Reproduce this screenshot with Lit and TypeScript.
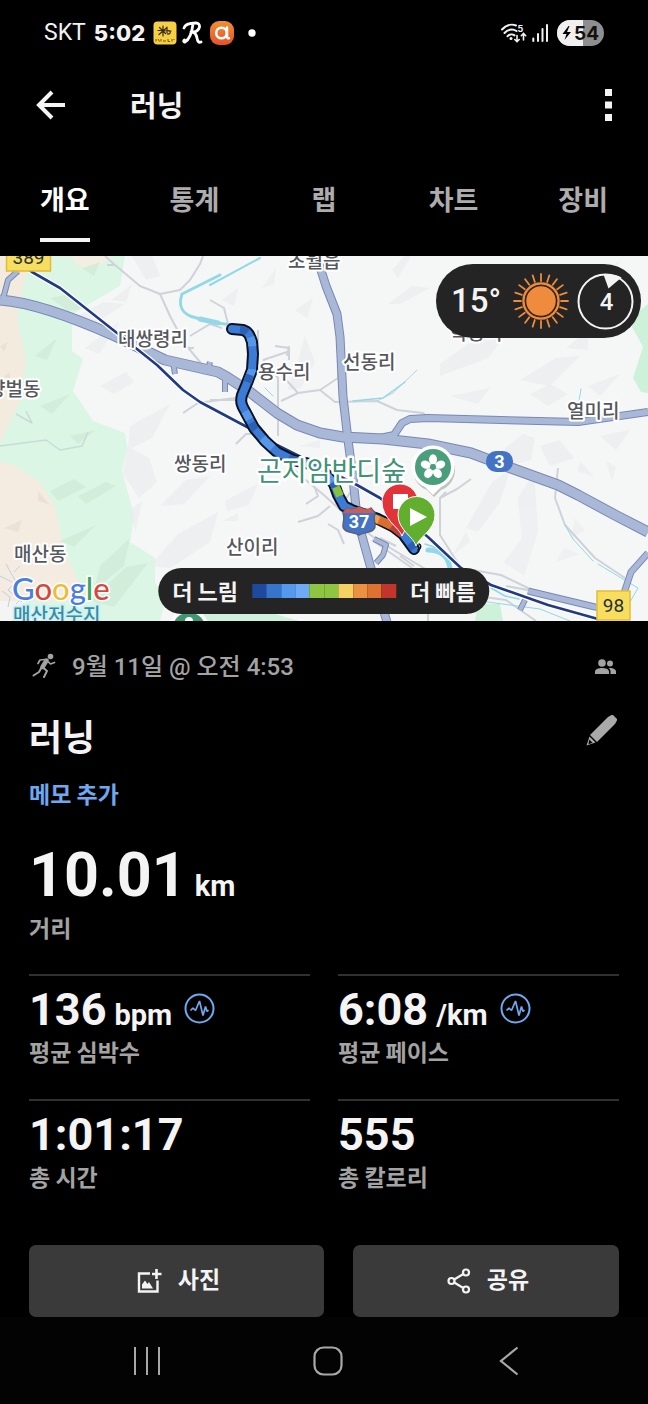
import { LitElement, html, svg, css } from "lit";
import { customElement, property, state } from "lit/decorators.js";
import { classMap } from "lit/directives/class-map.js";

const FONT = css`Roboto, "Noto Sans CJK KR", sans-serif`;
const KOREAN = css`"Noto Sans CJK KR", sans-serif`;

/* ---------- system status bar ---------- */
@customElement("status-bar")
class StatusBar extends LitElement {
  static styles = css`
    :host { display: block; color: #f2f2f2; }
    .bar { display: flex; align-items: center; justify-content: space-between; height: 66px; padding: 0 44px; font-family: ${FONT}; }
    .side { display: flex; align-items: center; gap: 8px; }
    .carrier { font-size: 23px; line-height: 28px; font-weight: 400; }
    .clock { font-family: Inter, sans-serif; font-size: 22px; line-height: 28px; font-weight: 800; }
    .apps { display: flex; align-items: center; gap: 5px; }
    svg { display: block; }
    .num { font-family: Inter, sans-serif; font-size: 19px; font-weight: 700; }
    .tiny { font-family: Inter, sans-serif; font-size: 9px; font-weight: 700; }
  `;
  render() {
    return html`
      <div class="bar">
        <div class="side">
          <span class="carrier">SKT</span>
          <span class="clock">5:02</span>
          <span class="apps">
            <svg width="24" height="24" viewBox="0 0 24 24" aria-hidden="true">
              <rect x=".5" y=".5" width="23" height="23" rx="4" fill="#f7cf45" />
              <path d="M10 5v10M5 9.500l13 .5M6 13.500l8-7M6.500 6.500l6 6M14 6v6M14 10c4-1.500 4.500 3.500 .5 3" fill="none" stroke="#332a10" stroke-width="1.200" stroke-linecap="round" />
              <path d="M3 18v2.500M5 18l1.500 2.500M8 18v2.500M10 20h3M15 18v2.500h2M19 18v2.500M21 18v1" stroke="#6a5716" stroke-width="1" fill="none" />
            </svg>
            <svg width="23" height="24" viewBox="0 0 23 24" aria-hidden="true">
              <path d="M2 7C3 3 9 2 14 2c5 0 5 7-2 9h-3c4 0 5 2 6 6 .5 3 1.500 5 4 4M11 3c-1 8-3 15-8 18-1 .5-2-1-.5-2" fill="none" stroke="#fff" stroke-width="2.800" stroke-linecap="round" stroke-linejoin="round" />
            </svg>
            <svg width="24" height="24" viewBox="0 0 24 24" aria-hidden="true">
              <defs><linearGradient id="o" x1="0" y1="0" x2="0" y2="1"><stop offset="0" stop-color="#ee9232" /><stop offset="1" stop-color="#e8502c" /></linearGradient></defs>
              <rect width="24" height="24" rx="9" fill="url(#o)" />
              <circle cx="11.500" cy="12" r="5.300" fill="none" stroke="#fff" stroke-width="2.500" />
              <path d="M17 6.500v8.500c0 2 1 2.500 2 2.200" fill="none" stroke="#fff" stroke-width="2.500" stroke-linecap="round" />
            </svg>
          </span>
          <svg width="22" height="8" viewBox="0 0 22 8" aria-hidden="true"><circle cx="10" cy="4" r="3.700" fill="#fff" /></svg>
        </div>
        <div class="side">
          <svg width="49" height="20" viewBox="0 0 49 20" aria-hidden="true">
            <g fill="none" stroke="#f2f2f2" stroke-width="2" stroke-linecap="round">
              <path d="M2 6.500C5.500 2.500 11 .5 16 2.500M4.500 10c3-3.500 8-4.500 12-2M7.500 13.200c2-2 5-2.400 7-.8" />
              <path d="M17 12.500v6M14.800 16.500l2.200 2.200 2.200-2.200M23.500 17v-6M21.300 12.700l2.200-2.200 2.200 2.200" stroke-width="1.600" />
            </g>
            <circle cx="11" cy="15.500" r="1.500" fill="#f2f2f2" />
            <text class="tiny" x="17.500" y="9" fill="#f2f2f2">5</text>
            <path d="M33.300 18v-2.500M38 18v-7M42.500 18V6M47 18V2" stroke="#f2f2f2" stroke-width="2" stroke-linecap="round" />
          </svg>
          <svg width="47" height="26" viewBox="0 0 47 26" role="img" aria-label="배터리 54%">
            <defs><clipPath id="b"><rect width="47" height="26" rx="13" /></clipPath></defs>
            <g clip-path="url(#b)"><rect width="47" height="26" fill="#8e8e8e" /><rect width="26" height="26" fill="#f0f0f0" /></g>
            <path d="M11.500 6 5.500 14h4L7.500 20l6.500-8h-4l2.500-6z" fill="#000" />
            <text class="num" x="17" y="20" fill="#111">54</text>
          </svg>
        </div>
      </div>
    `;
  }
}

/* ---------- map with the recorded route ---------- */
type Label = { t: string; x: number; y: number; kind?: string };
const LABELS: Label[] = [
  { t: "초월읍", x: 288, y: 12 },
  { t: "대쌍령리", x: 118, y: 90 },
  { t: "용수리", x: 258, y: 123 },
  { t: "선동리", x: 343, y: 113 },
  { t: "양벌동", x: -12, y: 140 },
  { t: "열미리", x: 567, y: 162 },
  { t: "쌍동리", x: 174, y: 215 },
  { t: "매산동", x: 14, y: 305 },
  { t: "산이리", x: 226, y: 298 },
  { t: "학동리", x: 450, y: 84 },
  { t: "매산저수지", x: 13, y: 366, kind: "water" },
  { t: "곤지암반디숲", x: 257, y: 225, kind: "park" },
];
const HIGHWAYS = [
  { w: 9, d: "M0 44C30 46 70 60 115 80L165 104 218 116 227 121 250 136 277 157 297 169 320 177 343 181 383 183 428 188 471 197 511 212 558 229 578 239 615 259 648 276" },
  { w: 6, d: "M380 182l14-3 8-12 8-4 18-1 150 4 70-10" },
  { w: 7, d: "M319 8l7 22 11 28 3 23 3 60 5 43 5 38 4 40 13 47 17 57" },
  { w: 5, d: "M528 335l67 16 20 2M648 297l-17 19-8 24" },
  { w: 4, d: "M3 43l5-19 10-9M374 283l12 6-3 10-7 8M520 354l5-10M225 122v14M173 106l2 12M208 114l2-8" },
];
const LEGEND = ["#1d4a9e", "#3774cc", "#5499ee", "#6eabf7", "#8fc641", "#8fc641", "#f5d062", "#ec9141", "#df7230", "#c1352a"];
const ROUTE = "M232 73l11 1c6 2 7 6 9 12l1 12-1 16-5 13-5 12c-2 7 0 11 3 16l9 17 11 13 12 11 16 8 17 4 14 8 10 12 4 11 6 11 10 5 24 8 16 8 9 7 11 15";
const RAIL = "M5-3l27 19 28 16 57 45 40 32 26 25 17 12 47 25 30 18 80 40 23 13 48 39 33 31 30 17 57 20 50 14";

@customElement("route-map")
class RouteMap extends LitElement {
  static styles = css`
    :host { display: block; }
    .map { position: relative; height: 365px; overflow: hidden; background: #f5f6f6; font-family: ${FONT}; }
    .canvas { display: block; width: 100%; height: 100%; }
    .place { font-size: 19px; font-weight: 500; fill: #55585e; stroke: #fff; stroke-width: 4px; stroke-linejoin: round; paint-order: stroke; }
    .water { fill: #3a8ba3; stroke: #cdf2f3; }
    .park { font-size: 27px; fill: #3f9274; font-weight: 400; stroke-width: 5px; }
    .shield { font-size: 19px; fill: #27303c; }
    .blue { font-size: 18px; font-weight: 700; fill: #fff; }
    .google { font-family: Lato, sans-serif; font-size: 31px; font-weight: 500; stroke: #fff; stroke-width: 3px; paint-order: stroke; }
    .pill { position: absolute; display: flex; align-items: center; background: #242424; color: #f4f4f4; }
    .weather { top: 8px; right: 7px; height: 74px; padding: 0 7px 0 15px; border-radius: 37px; gap: 8px; }
    .temp { font-size: 33px; line-height: 40px; font-weight: 500; width: 54px; }
    .weather svg { display: block; }
    .uv { font-size: 24px; font-weight: 500; fill: #f4f4f4; }
    .legend { bottom: 7px; left: 50%; transform: translateX(-50%); height: 46px; padding: 0 14px; border-radius: 23px; gap: 14px; font-family: ${KOREAN}; font-size: 22px; line-height: 30px; font-weight: 700; white-space: nowrap; }
    .legend .word { padding-bottom: 2px; }
    .scale { display: flex; width: 144px; height: 14px; }
    .scale span { flex: 1; }
  `;
  render() {
    return html`
      <div class="map">
        <svg class="canvas" viewBox="0 0 648 365" preserveAspectRatio="xMidYMid slice" role="img" aria-label="러닝 경로 지도">
          <path d="M0 0h125l-5 30-26 15-22 14 0 36 11 8-10 32 20 30 32 12 2 14-5 24 12 44-4 27 25 16 0 24 10 20-5 19H0z" fill="#dbf6e4" />
          <path d="M0 0h25l3 10-8 35-3 18 9 42-6 40-20 42z" fill="#f4ebdf" />
          <path d="M0 206l12 2 28 18 15 24 7 35 13 34 13 21-20 5-68 0z" fill="#f4ece1" />
          <path d="M70 0h42l-10 9c-10 4-22 4-28-3z" fill="#f3eee2" />
          <path d="M0 345h24l20 20H0z" fill="#f4f4f4" />
          <path d="M648 48l-20 16 8 14 7 13-10 31 8 14 7 1zM478 348h22l3 17h-28zM195 352l80 6 24 7h-110z" fill="#cdf2d9" />
          <g fill="#cbead6" opacity=".6">
            <path d="M35 100l22-18-10 22zM82 12l18-6-6 14zM40 150l30-12-18 20zM50 235l24-12 12 8-28 14zM78 240l28-14 10 4-30 18zM60 285l36-16-22 22zM50 42l20-4 18 14-20 3zM100 310l30-28-6 28-30 24zM70 180l26-6-18 14zM90 345l36-34 22-4-34 44z" />
          </g>
          <g fill="#eaddcf" opacity=".7"><path d="M4 272l18-8-4 12zM38 235l12 14-12-4zM4 120l6-4v10zM0 90l8-4-4 10z" /></g>
          <g fill="#ebecee" opacity=".65">
            <path d="M75 62l28-16 22 2-34 22zM112 44l20-16-6 18zM85 92l34-26-20 32zM100 130l26-14 8 10-20 12zM130 170l40-22-18 34-24 12zM128 255l14-10-6 30zM127 190l22 12 8 24-18 16-16-24zM150 310l28-32 40-22-8 30-40 26zM160 250l26-26 24-4-26 28zM132 0l20 0 8 20-14 4z" />
            <path d="M222 44l16-12-4 18zM262 32l14-20-2 16zM295 54l18-12-6 20zM305 80l10 26-14 26-14 2 10-26zM392 14l14-16 6 0-14 24zM388 48l24-18 18 2-30 16zM225 245l34-18-10 22-22 6zM222 265l16-8 0 8zM300 190l20-6 0 8z" />
            <path d="M440 108l28-20 40-12-20 26-48 18zM520 124l36-22 24-2-30 30zM566 92l22-18 0 20zM600 18l20-14-10 22zM588 130l32-12-20 22zM450 140l40-8-12 16zM530 138l20-10 18 10-20 12z" />
            <path d="M466 272l26-46 18-12-10 32-22 30zM505 192l18-14 12 4-4 22-24 6zM518 242l16-26 4 60-14 44-20-14 18-24zM452 300l14-24 4 10zM540 190l20-6 14 18-24 8zM575 262l10 12-14 8zM606 205l10 6-4 14zM580 205l14 16-16-6zM600 180l30-6-14 20zM556 306l8-14 16 6z" />
          </g>
          <g fill="none" stroke="#cfd3d9" stroke-width="2" stroke-linejoin="round">
            <path d="M105 0l10 9 25 21 20 8 10 22 15 28 20 24M160 38l20-4 10-10 10-16 3-8M115 9l-8 0M185 92l9 0M190 80l20-12 12 4M183 157l15-10 22-3 15-2" />
            <path d="M210 44l14 8 4 16M258 74l0 24M263 104l27-9M275 90l14 2 0 12M289 90l-2 10M280 117l18 20 22-3 15 12 42-1 20 9 26 3 10 8M263 104l15 18 0 58M281 145l17-8M320 134l18-12 0-8M210 144l26 0 12-10" />
            <path d="M236 188l10-10 12 0M277 198l24 22 24 20 24 22 28 22 50 30M306 248l12-8-4-10M298 266l20-6 12-10M328 268l10 6 6 14M330 230l8 22 10-12 6-10M372 284l40 28M400 300l14 10M396 290l-16-8" />
            <path d="M558 212l-3 30 10 27 30 33 30 20M471 223l-14 10-17 9 0 37 21 33 40 7 27 13M440 242l6-6M506 330l22 4M476 340l30 4 30 21M455 345l32-4M428 330l0 35" />
            <path d="M16 158l16 9-6-12M0 190l46-6 14 10 22-4 6-14" stroke="#c9dbd8" stroke-width="1.500" />
            <path d="M6 308l10 18-8 8 14 12M0 320l12 6M14 316l6-6M2 335l8 6-2 10M24 340l-8 8M417 114l-24 23-16 8" stroke="#bfd0e2" stroke-width="1" />
          </g>
          <g fill="none" stroke="#93d8e6" stroke-linecap="round" stroke-linejoin="round">
            <path d="M220 19l-22 11-16 8c-4 12 0 18 8 22l20 6 22 3" stroke-width="3" />
            <path d="M200 63l18 4M428 294c12 0 20 6 22 18" stroke-width="5" />
            <path d="M210 29l50-27" stroke-width="2" />
            <path d="M491 332l14 8 14 3M353 145l30-3 22-16M425 288l12 4" stroke-width="1.500" />
            <path d="M565 269l8 14 20 22M598 308l40 24-8 14M581 133l-2 12M265 132l8 8M480 345l60 8 30 12" stroke-width="1" />
          </g>
          ${HIGHWAYS.map((h) => svg`<path d=${h.d} fill="none" stroke="#7988b5" stroke-width=${h.w + 2} stroke-linejoin="round" />`)}
          ${HIGHWAYS.map((h) => svg`<path d=${h.d} fill="none" stroke="#a9b8d7" stroke-width=${h.w} stroke-linejoin="round" />`)}
          <g fill="none" stroke-linejoin="round">
            <path d=${RAIL} stroke="#fff" stroke-width="5" />
            <path d=${RAIL} stroke="#213a82" stroke-width="2.600" />
          </g>
          <g fill="none" stroke-linejoin="round" stroke-linecap="round">
            <path d=${ROUTE} stroke="#0b1220" stroke-width="12" />
            <path d=${ROUTE} stroke="#3c7cd6" stroke-width="8" />
            <path d=${ROUTE} stroke="#5797ea" stroke-width="8" stroke-linecap="butt" stroke-dasharray="9 23 14 31" stroke-dashoffset="-22" />
            <path d=${ROUTE} stroke="#2b60b4" stroke-width="8" stroke-linecap="butt" stroke-dasharray="8 44" stroke-dashoffset="-8" />
            <path d="M336 231l4 9" stroke="#86c23d" stroke-width="8" stroke-linecap="butt" />
            <path d="M374 262l6 3" stroke="#eda24b" stroke-width="8" stroke-linecap="butt" />
            <path d="M379 264l13 6" stroke="#dc6d2d" stroke-width="8" stroke-linecap="butt" />
            <path d="M392 270l10 8" stroke="#bd4030" stroke-width="8" stroke-linecap="butt" />
            <path d="M418 294c4-2 3-5 1-6" stroke="#0b1220" stroke-width="1.500" />
          </g>
          ${LABELS.map((l) => svg`<text class="place ${l.kind ?? ""}" x=${l.x} y=${l.y}>${l.t}</text>`)}

          <rect x="6.500" y="-10" width="44" height="25" fill="#f8de5e" stroke="#dfba3d" stroke-width="1.500" />
          <text class="shield" x="28.500" y="8" text-anchor="middle">389</text>
          <rect x="597" y="335" width="33" height="29" fill="#f8de5e" stroke="#e3bd3a" stroke-width="1.500" />
          <text class="shield" x="613.500" y="356" text-anchor="middle">98</text>
          <rect x="486" y="195" width="27" height="21" rx="10" fill="#4473c5" />
          <text class="blue" x="499.500" y="212" text-anchor="middle">3</text>
          <path d="M347 252c3 2 7 2 12-1 5 3 9 3 12 1l4 5c-2 5 0 8 0 13 0 7-11 6-16 9-5-3-16-2-16-9 0-5 2-8 0-13z" fill="#4473c5" stroke="#5b5f78" stroke-width="1.500" />
          <path d="M347 252c3 2 7 2 12-1 5 3 9 3 12 1l3 5h-31z" fill="#cf5b55" />
          <text class="blue" x="359" y="272" text-anchor="middle">37</text>

          <path d="M433 239l-7-7a21 21 0 1 1 14 0z" fill="#7d8886" opacity=".45" transform="translate(1 2)" />
          <path d="M433 239l-8-8a21.500 21.500 0 1 1 16 0z" fill="#fff" />
          <circle cx="433" cy="211" r="18" fill="#4a9e7c" />
          <g fill="#fff">
            ${[0, 72, 144, 216, 288].map((a) => svg`<ellipse cx="433" cy="203.500" rx="4" ry="5.200" transform="rotate(${a} 433 211)" />`)}
          </g>
          <circle cx="433" cy="211" r="3" fill="#4a9e7c" />
          <circle cx="189" cy="373" r="20" fill="#fff" />
          <circle cx="189" cy="373" r="16.500" fill="#3f9673" />
          <circle cx="189" cy="365" r="4" fill="#fff" />

          <path d="M402 280c-3-9-20-17-20-34a18 18 0 0 1 36 0c0 12-12 24-16 34z" fill="#e2323a" stroke="#fff" stroke-width="1" />
          <rect x="393" y="238" width="15" height="15" fill="#fff" />
          <path d="M416 290c-2-9-18-16-18-31a18.500 18.500 0 0 1 37 0c0 15-16 22-19 31z" fill="#62ae2f" stroke="#fff" stroke-width="1" />
          <path d="M410 252v18l17-9z" fill="#fff" />

          <text class="google" x="12" y="344"><tspan fill="#4a7fe0">G</tspan><tspan fill="#d6483c">o</tspan><tspan fill="#edbc3a">o</tspan><tspan fill="#4a7fe0">g</tspan><tspan fill="#46a35c">l</tspan><tspan fill="#d6483c">e</tspan></text>
        </svg>

        <div class="pill weather">
          <span class="temp">15°</span>
          <svg width="56" height="56" viewBox="-28 -28 56 56" role="img" aria-label="맑음">
            <circle r="17.500" fill="none" stroke="#ee8b3c" stroke-width="2.500" />
            <circle r="15.500" fill="#ee8b3c" stroke="#33261c" stroke-width="1.500" />
            ${Array.from({ length: 20 }, (_, i) => svg`<path d="M0-20V-27" stroke="#ee8b3c" stroke-width="1.800" stroke-linecap="round" transform="rotate(${i * 18})" />`)}
          </svg>
          <svg width="57" height="57" viewBox="-28.500 -28.500 57 57" role="img" aria-label="바람 4">
            <circle r="27" fill="none" stroke="#f4f4f4" stroke-width="2" />
            <path d="M-5-27 0-13 13-24Q6-28-5-27z" fill="#f4f4f4" transform="translate(3 0)" />
            <text class="uv" x="1" y="8" text-anchor="middle">4</text>
          </svg>
        </div>
        <div class="pill legend">
          <span class="word">더 느림</span>
          <span class="scale">${LEGEND.map((c) => html`<span style="background:${c}"></span>`)}</span>
          <span class="word">더 빠름</span>
        </div>
      </div>
    `;
  }
}

/* ---------- one measured value with its caption ---------- */
@customElement("stat-item")
class StatItem extends LitElement {
  @property() value = "";
  @property() unit = "";
  @property() caption = "";
  @property({ type: Boolean }) large = false;
  @property({ type: Boolean }) chart = false;
  static styles = css`
    :host { display: block; font-family: ${FONT}; }
    .stat { display: flex; flex-direction: column; gap: 2px; border-top: 2px solid #313131; padding: 10px 0 33px; }
    .stat.large { gap: 5px; border-top: 0; padding: 0 0 32px; }
    .row { display: flex; align-items: baseline; gap: 8px; color: #f4f4f4; font-weight: 700; }
    .value { font-size: 45px; line-height: 48px; }
    .large .value { font-size: 61px; line-height: 64px; }
    .unit { font-size: 29px; line-height: 32px; font-weight: 700; }
    .caption { color: #a3a3a3; font-family: ${KOREAN}; font-size: 23px; line-height: 30px; font-weight: 700; }
    .open { align-self: flex-start; margin: 7px 0 0 4px; padding: 0; border: 0; background: none; }
    .open svg { display: block; }
  `;
  render() {
    return html`
      <div class=${classMap({ stat: true, large: this.large })}>
        <div class="row">
          <span class="value">${this.value}</span>
          ${this.unit ? html`<span class="unit">${this.unit}</span>` : ""}
          ${this.chart
            ? html`<button class="open" aria-label="${this.caption} 차트">
                <svg width="31" height="31" viewBox="0 0 31 31" fill="none" stroke="#6ea8f0">
                  <circle cx="15.500" cy="15.500" r="14" stroke-width="2" />
                  <path d="M6.500 17.500l2.500-2.500 2.500 2.500 4-9.500 3.500 14.500 2.500-9 1.500 5 1.500-1.500" stroke-width="1.700" stroke-linejoin="bevel" />
                </svg>
              </button>`
            : ""}
        </div>
        <div class="caption">${this.caption}</div>
      </div>
    `;
  }
}

@customElement("app-root")
class AppRoot extends LitElement {
  @state() private tab = 0;
  private tabs = ["개요", "통계", "랩", "차트", "장비"];

  static styles = css`
    :host { display: block; background: #000; min-height: 100vh; font-family: ${FONT}; color: #f4f4f4; }
    button { font: inherit; color: inherit; border: 0; padding: 0; background: none; cursor: pointer; }
    svg { display: block; }
    .appbar { display: flex; align-items: center; height: 78px; padding: 0 36px; }
    .appbar h1 { flex: 1; margin: 0 0 0 64px; padding-bottom: 2px; font-family: ${KOREAN}; font-size: 29px; line-height: 40px; font-weight: 700; }
    .tabs { display: grid; grid-template-columns: repeat(5, 1fr); height: 98px; margin-bottom: 14px; }
    .tab { display: flex; justify-content: center; align-items: flex-end; font-family: ${KOREAN}; font-size: 27px; line-height: 38px; font-weight: 700; color: #adadad; }
    .tab span { padding-bottom: 20px; border-bottom: 4px solid transparent; }
    .tab.on { color: #fff; }
    .tab.on span { border-color: #f4f4f4; }
    .content { padding: 30px 29px 0; }
    .meta { display: flex; align-items: center; gap: 16px; height: 30px; padding: 0 3px 0 2px; color: #a3a3a3; }
    .meta time { flex: 1; padding-top: 2px; font-size: 24px; line-height: 30px; font-weight: 500; }
    .heading { display: flex; align-items: center; justify-content: space-between; margin: 32px 0 21px; }
    .heading h2 { margin: 0; font-family: ${KOREAN}; font-size: 36px; line-height: 44px; font-weight: 700; }
    .edit { align-self: flex-start; margin: 2px 2px 0 0; }
    .memo { display: block; width: max-content; margin-bottom: 35px; font-family: ${KOREAN}; font-size: 23px; line-height: 30px; font-weight: 700; color: #6ea8f0; text-decoration: none; }
    .grid { display: grid; grid-template-columns: 1fr 1fr; column-gap: 28px; }
    .actions { display: flex; gap: 29px; margin-top: 21px; }
    .action { display: flex; align-items: center; justify-content: center; gap: 16px; height: 72px; padding-left: 4px; border-radius: 7px; background: #3a3a3a; font-size: 23px; line-height: 30px; font-weight: 700; }
    .photo { flex: 10 1 0; }
    .share { flex: 9 1 0; }
    .nav { display: flex; justify-content: center; height: 87px; padding-left: 7px; background: #030303; }
    .nav button { display: flex; align-items: center; justify-content: center; width: 181px; }
  `;

  render() {
    return html`
      <status-bar></status-bar>
      <header class="appbar">
        <button aria-label="뒤로">
          <svg width="30" height="30" viewBox="0 0 30 30" fill="none" stroke="#f4f4f4" stroke-width="4"><path d="M29 15H4M16 2 3 15l13 13" /></svg>
        </button>
        <h1>러닝</h1>
        <button aria-label="더보기">
          <svg width="8" height="32" viewBox="0 0 8 32" fill="#f4f4f4"><path d="M1 0h7v7h-7zM1 12.500h7v7h-7zM1 25h7v7h-7z" /></svg>
        </button>
      </header>
      <nav class="tabs" role="tablist">
        ${this.tabs.map(
          (t, i) => html`<button role="tab" aria-selected=${i === this.tab} class=${classMap({ tab: true, on: i === this.tab })} @click=${() => (this.tab = i)}><span>${t}</span></button>`
        )}
      </nav>
      <route-map></route-map>
      <main class="content">
        <div class="meta">
          <svg width="25" height="26" viewBox="0 0 25 26" fill="none" stroke="#a3a3a3" stroke-linecap="round" stroke-linejoin="round" aria-hidden="true">
            <circle cx="19.500" cy="3.500" r="2.800" fill="#a3a3a3" stroke="none" />
            <path d="M15.500 7.500 11.500 14" stroke-width="4.500" />
            <path d="M14 6.500 9 7 7 10.500M17 8.500l2.500 2.500 4-1.500" stroke-width="1.700" />
            <path d="M10.500 14.500 8 19l-5.500 3.500M12 14.500l4 3.500-3 6" stroke-width="2" />
          </svg>
          <time>9월 11일 @ 오전 4:53</time>
          <svg width="21" height="18" viewBox="0 0 21 18" fill="#a3a3a3" role="img" aria-label="공개">
            <circle cx="7" cy="6" r="3.800" /><path d="M0 17v-2.500C0 12 4 11 7 11s7 1 7 3.500V17z" />
            <circle cx="15" cy="6.500" r="3" /><path d="M15 11c3 0 6 1.200 6 3.500V17h-5.500v-2.500c0-1.500-.8-2.500-2-3.400z" />
          </svg>
        </div>
        <div class="heading">
          <h2>러닝</h2>
          <button class="edit" aria-label="이름 편집">
            <svg width="31" height="31" viewBox="0 0 31 31" fill="#a9a9a9"><path d="M4 20 22 2l3.500-2q1-.6 2 .4l3 3q1 1 .4 2L29 9 11 27z" /><path d="M3.500 21.500l6 6-9 3z" /><path d="M3.200 24.500l3.300 3.300-4 1.400z" fill="#000" /></svg>
          </button>
        </div>
        <a class="memo" href="#memo">메모 추가</a>
        <stat-item large value="10.01" unit="km" caption="거리"></stat-item>
        <div class="grid">
          <stat-item value="136" unit="bpm" caption="평균 심박수" chart></stat-item>
          <stat-item value="6:08" unit="/km" caption="평균 페이스" chart></stat-item>
          <stat-item value="1:01:17" caption="총 시간"></stat-item>
          <stat-item value="555" caption="총 칼로리"></stat-item>
        </div>
        <div class="actions">
          <button class="action photo">
            <svg width="25" height="25" viewBox="0 0 25 25" aria-hidden="true">
              <path d="M13 4.500H2v18h18.500v-11" fill="none" stroke="#f4f4f4" stroke-width="2.400" />
              <path d="M19.500 0v10M15 5h9.500" stroke="#f4f4f4" stroke-width="2.600" />
              <path d="M5 19.500v-4l3-4 2.500 3.500 1.500-2 4 6.500z" fill="#f4f4f4" />
            </svg>
            사진
          </button>
          <button class="action share">
            <svg width="24" height="26" viewBox="0 0 24 26" fill="none" stroke="#f4f4f4" stroke-width="2.200" aria-hidden="true">
              <circle cx="19" cy="4.500" r="3" /><circle cx="4.500" cy="13" r="3" /><circle cx="19" cy="21.500" r="3" />
              <path d="M7.200 11.500 16.300 6M7.200 14.500l9.100 5.500" />
            </svg>
            공유
          </button>
        </div>
      </main>
      <footer class="nav">
        <button aria-label="최근 앱"><svg width="28" height="28" viewBox="0 0 28 28" stroke="#a8a8a8" stroke-width="2"><path d="M2 0v28M14 0v28M26 0v28" /></svg></button>
        <button aria-label="홈"><svg width="30" height="30" viewBox="0 0 30 30"><rect x="1.500" y="1.500" width="27" height="27" rx="9" fill="none" stroke="#a8a8a8" stroke-width="2.200" /></svg></button>
        <button aria-label="뒤로"><svg width="20" height="30" viewBox="0 0 20 30" fill="none" stroke="#a8a8a8" stroke-width="2.200"><path d="M18.500 1.500 2 15l16.500 13.500" /></svg></button>
      </footer>
    `;
  }
}
